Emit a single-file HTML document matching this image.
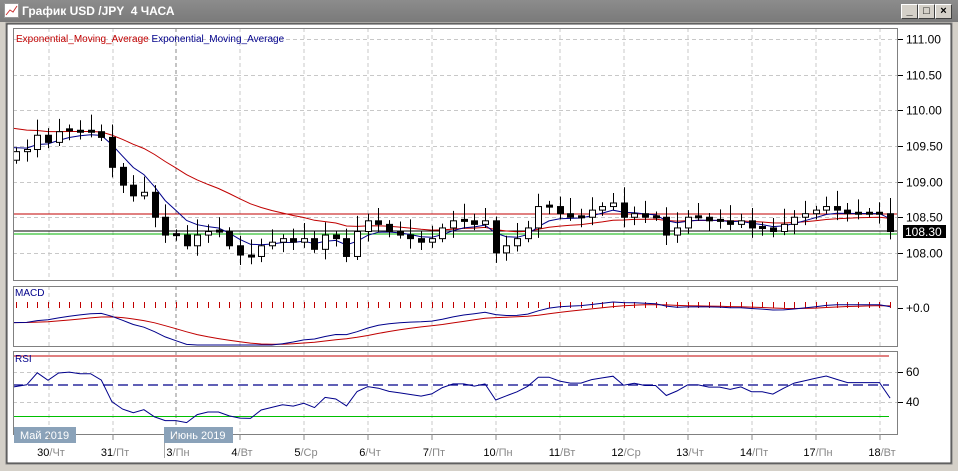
<!DOCTYPE html>
<html><head><meta charset="utf-8"><style>
html,body{margin:0;padding:0;width:958px;height:471px;overflow:hidden;background:#d4d0c8;font-family:"Liberation Sans",sans-serif}
#t{position:absolute;left:0;top:0;width:958px;height:22px;background:linear-gradient(#8c8c8c,#7a7a7a);}
#t span{position:absolute;left:22px;top:4px;color:#fff;font-weight:bold;font-size:12px}
.b{position:absolute;top:4px;width:15px;height:13px;background:#d4d0c8;border:1px solid;border-color:#fff #404040 #404040 #fff;font-size:11px;font-weight:bold;text-align:center;line-height:13px}
svg{position:absolute;left:0;top:0}
</style></head><body>
<div id="t"><svg width="16" height="16" style="left:4px;top:3px"><rect x="0.5" y="0.5" width="14" height="14" fill="#fff" stroke="#999"/><polyline points="2,12 6,7 9,9 13,3" fill="none" stroke="#c33"/></svg><span>График USD /JPY &nbsp;4 ЧАСА</span></div>
<div class="b" style="left:901px">_</div><div class="b" style="left:918px">□</div><div class="b" style="left:935px">×</div>
<svg id="s" width="958" height="471" style="top:0"></svg>
<script>
var C=[109.42,109.45,109.65,109.55,109.7,109.72,109.7,109.7,109.62,109.2,108.95,108.8,108.85,108.5,108.25,108.25,108.1,108.25,108.3,108.3,108.1,107.97,107.95,108.1,108.15,108.2,108.15,108.2,108.05,108.25,108.2,107.95,108.3,108.45,108.4,108.3,108.25,108.2,108.15,108.2,108.35,108.45,108.45,108.4,108.45,108.0,108.1,108.2,108.35,108.65,108.65,108.55,108.5,108.5,108.6,108.65,108.7,108.5,108.55,108.5,108.5,108.25,108.35,108.5,108.5,108.45,108.45,108.4,108.45,108.35,108.35,108.3,108.4,108.5,108.55,108.6,108.65,108.6,108.55,108.55,108.55,108.55,108.3];
var h='';
function Y(p){return 39+(111-p)*71.3}
function X(i){return 16+i*10.66}
h+='<rect x="6" y="23" width="946" height="441" fill="#fff"/>';
h+='<rect x="6" y="23" width="946" height="441" fill="none" stroke="#808080"/>';
h+='<rect x="7" y="24" width="944" height="439" fill="none" stroke="#404040"/>';
var P=[[13,28,897,280],[13,286,897,346],[13,351,897,434]];
var gx=[49,113,176,240,304,368,432,496,560,624,688,752,816,880];
P.forEach(function(p){
 gx.forEach(function(x){h+='<line x1="'+x+'" y1="'+p[1]+'" x2="'+x+'" y2="'+p[3]+'" stroke="'+(x==176?'#888':'#c8c8c8')+'" stroke-dasharray="4,3"/>';});
});
[111,110.5,110,109.5,109,108.5,108].forEach(function(v){var y=Math.round(Y(v))+.5;h+='<line x1="13" y1="'+y+'" x2="897" y2="'+y+'" stroke="#c8c8c8" stroke-dasharray="4,3"/><line x1="897" y1="'+y+'" x2="903" y2="'+y+'" stroke="#000"/><text x="906" y="'+(y+4)+'" font-size="12" font-family="Liberation Sans">'+v.toFixed(2)+'</text>';});
[[372,'60'],[402,'40']].forEach(function(a){h+='<line x1="13" y1="'+a[0]+'.5" x2="897" y2="'+a[0]+'.5" stroke="#c8c8c8" stroke-dasharray="4,3"/><line x1="897" y1="'+a[0]+'.5" x2="903" y2="'+a[0]+'.5" stroke="#000"/><text x="906" y="'+(a[0]+4)+'" font-size="12">'+a[1]+'</text>';});
h+='<line x1="897" y1="308.5" x2="903" y2="308.5" stroke="#000"/><text x="906" y="312" font-size="12">+0.0</text>';
h+='<line x1="13" y1="214" x2="897" y2="214" stroke="#c00000"/>';
h+='<line x1="13" y1="231" x2="897" y2="231" stroke="#000"/>';
h+='<line x1="13" y1="234" x2="897" y2="234" stroke="#00b000"/>';
function ema(n,init){var e=init,r=[];C.forEach(function(c){e=e+(c-e)*2/(n+1);r.push(e)});return r}
var r=ema(22,109.78),b=ema(6,109.5);
function pl(a,col,f){return '<polyline fill="none" stroke="'+col+'" points="'+a.map(function(v,i){return (i==0?13:X(i)).toFixed(1)+','+f(v).toFixed(1)}).join(' ')+'"/>'}
h+=pl(r,'#c00000',Y)+pl(b,'#00008b',Y);
C.forEach(function(c,i){var o=i?C[i-1]:109.3;if(Math.abs(o-c)<0.02)o=c+0.02;var hi=Math.max(o,c)+0.06+((i*7)%5)*0.04,lo=Math.min(o,c)-0.05-((i*3)%4)*0.03;
var x=Math.round(X(i))+.5;h+='<line x1="'+x+'" y1="'+Y(hi)+'" x2="'+x+'" y2="'+Y(lo)+'" stroke="#000"/>';
var t=Y(Math.max(o,c)),bt=Y(Math.min(o,c));h+='<rect x="'+(x-3)+'" y="'+t+'" width="6" height="'+Math.max(2,bt-t)+'" fill="'+(c>o?'#fff':'#000')+'" stroke="#000"/>';});
var e12=ema(12,109.6),e26=ema(26,109.75),m=e12.map(function(v,i){return v-e26[i]});
var sg=[],s=m[0];m.forEach(function(v){s=s+(v-s)*2/10;sg.push(s)});
function MY(v){return 308+ (-v)*95}
m.forEach(function(v,i){var x=Math.round(X(i))+.5;h+='<line x1="'+x+'" y1="308" x2="'+x+'" y2="302" stroke="#c00000"/>';});
h+=pl(sg,'#c00000',function(v){return Math.min(345,MY(v))})+pl(m,'#00008b',function(v){return Math.min(345,MY(v))});
var rs=[],ag=0.03,al=0.03;C.forEach(function(c,i){var d=i?c-C[i-1]:0;ag=(ag*13+Math.max(d,0))/14;al=(al*13+Math.max(-d,0))/14;var v=100-100/(1+ag/al);rs.push(50+(v-50)*0.75)});
function RY(v){return 387-(v-50)*1.5}
h+='<line x1="13" y1="356" x2="889" y2="356" stroke="#c00000"/><line x1="13" y1="416.5" x2="889" y2="416.5" stroke="#00c000"/><line x1="13" y1="385" x2="889" y2="385" stroke="#00008b" stroke-dasharray="10,5" stroke-width="1.3"/>';
h+=pl(rs,'#00008b',function(v){return Math.max(358,Math.min(432,RY(v)))});
P.forEach(function(p){h+='<rect x="'+p[0]+'.5" y="'+p[1]+'.5" width="'+(p[2]-p[0])+'" height="'+(p[3]-p[1])+'" fill="none" stroke="#808080"/>';});
h+='<text x="16" y="42" font-size="10" font-family="Liberation Sans"><tspan fill="#c00000">Exponential_Moving_Average</tspan> <tspan fill="#00008b">Exponential_Moving_Average</tspan></text>';
h+='<text x="15" y="296" font-size="10" fill="#00008b">MACD</text><text x="15" y="362" font-size="10" fill="#00008b">RSI</text>';
h+='<rect x="903" y="225" width="43" height="13" fill="#000"/><text x="905" y="236" font-size="12" fill="#fff">108.30</text>';
h+='<rect x="14" y="427" width="62" height="16" fill="#8aa2b9"/><text x="20" y="439" font-size="11" fill="#fff">Май 2019</text>';
h+='<rect x="164" y="427" width="69" height="16" fill="#8aa2b9"/><text x="170" y="439" font-size="11" fill="#fff">Июнь 2019</text>';
var d=['30/Чт','31/Пт','3/Пн','4/Вт','5/Ср','6/Чт','7/Пт','10/Пн','11/Вт','12/Ср','13/Чт','14/Пт','17/Пн','18/Вт'];
d.forEach(function(t,i){var x=gx[i];var p=t.split('/');h+='<line x1="'+x+'" y1="434" x2="'+x+'" y2="440" stroke="#888"/><text x="'+(x+2)+'" y="456" font-size="11" text-anchor="middle"><tspan fill="#000">'+p[0]+'</tspan><tspan fill="#888">/'+p[1]+'</tspan></text>';});
h+='<line x1="164.5" y1="443" x2="164.5" y2="458" stroke="#aaa"/>';
document.getElementById('s').innerHTML=h;
</script>
</body></html>
